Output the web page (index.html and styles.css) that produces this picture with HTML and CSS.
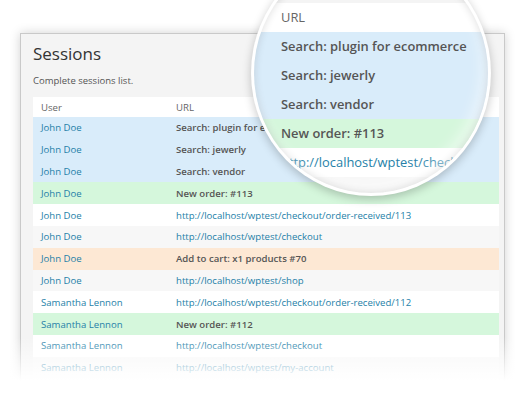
FILE: index.html
```html
<!doctype html>
<html lang="en">
  <head>
    <meta charset="UTF-8" />
    <meta name="viewport" content="width=device-width, initial-scale=1.0" />
    <title>Sessions</title>
    <link rel="stylesheet" href="styles.css">
  </head>
  <body>
    <div class="stage">
      <div class="card">
        <h1>Sessions</h1>
        <p class="desc">Complete sessions list.</p>

        <table class="sessions">
          <colgroup>
            <col class="col-user" />
            <col />
          </colgroup>
          <thead>
            <tr><th>User</th><th>URL</th></tr>
          </thead>
          <tbody>
            <tr class="search"><td><a href="#">John Doe</a></td><td class="action">Search: plugin for ecommerce</td></tr>
            <tr class="search"><td><a href="#">John Doe</a></td><td class="action">Search: jewerly</td></tr>
            <tr class="search"><td><a href="#">John Doe</a></td><td class="action">Search: vendor</td></tr>
            <tr class="order"><td><a href="#">John Doe</a></td><td class="action">New order: #113</td></tr>
            <tr><td><a href="#">John Doe</a></td><td><a href="#">http://localhost/wptest/checkout/order-received/113</a></td></tr>
            <tr><td><a href="#">John Doe</a></td><td><a href="#">http://localhost/wptest/checkout</a></td></tr>
            <tr class="cart"><td><a href="#">John Doe</a></td><td class="action">Add to cart: x1 products #70</td></tr>
            <tr><td><a href="#">John Doe</a></td><td><a href="#">http://localhost/wptest/shop</a></td></tr>
            <tr><td><a href="#">Samantha Lennon</a></td><td><a href="#">http://localhost/wptest/checkout/order-received/112</a></td></tr>
            <tr class="order"><td><a href="#">Samantha Lennon</a></td><td class="action">New order: #112</td></tr>
            <tr><td><a href="#">Samantha Lennon</a></td><td><a href="#">http://localhost/wptest/checkout</a></td></tr>
            <tr><td><a href="#">Samantha Lennon</a></td><td><a href="#">http://localhost/wptest/my-account</a></td></tr>
          </tbody>
        </table>
      </div>

      <!-- magnifier over the URL column -->
      <div class="lens" aria-hidden="true">
        <div class="lens-rows">
          <div class="lens-row head">URL</div>
          <div class="lens-row search action">Search: plugin for ecommerce</div>
          <div class="lens-row search action">Search: jewerly</div>
          <div class="lens-row search action">Search: vendor</div>
          <div class="lens-row order action">New order: #113</div>
          <div class="lens-row link">http://localhost/wptest/checkout/order-received/113</div>
          <div class="lens-row stripe"></div>
        </div>
      </div>

      <div class="fade"></div>
    </div>
  </body>
</html>
```

FILE: styles.css
```css
html,
body {
  margin: 0;
  background: #fff;
}
body {
  font-family: "Open Sans", "DejaVu Sans", sans-serif;
  width: 524px;
  height: 393px;
  overflow: hidden;
}
.stage {
  position: relative;
  height: 393px;
  padding: 33px 19px 0 20px;
  box-sizing: border-box;
  overflow: hidden;
}
.card {
  background: #f4f4f4;
  border: 1px solid #c9c9c9;
  box-shadow: 0 0 10px rgba(0, 0, 0, 0.18);
  padding: 9px 5px 0 12px;
  height: 380px;
}
h1 {
  margin: 0;
  font-size: 17px;
  line-height: 22px;
  font-weight: 400;
  color: #333;
}
.desc {
  margin: 9px 0 9px;
  font-size: 9.5px;
  line-height: 14px;
  color: #555;
}
.sessions {
  width: 100%;
  border-collapse: collapse;
  table-layout: fixed;
  font-size: 9.6px;
}
.col-user {
  width: 135px;
}
.sessions th,
.sessions td {
  padding: 0 8px;
  text-align: left;
  white-space: nowrap;
  overflow: hidden;
}
.sessions th {
  height: 20px;
  background: #fff;
  font-weight: 400;
  color: #666;
}
.sessions td {
  height: 21.8px;
  background: #fff;
}
.sessions tbody tr:nth-child(even) td {
  background: #f7f7f7;
}
.sessions a {
  color: #257fa8;
  text-decoration: none;
}
.sessions .action {
  color: #555;
  font-weight: 600;
}
.sessions tbody tr.search td {
  background: #d9ecfa;
}
.sessions tbody tr.order td {
  background: #d5f7dc;
}
.sessions tbody tr.cart td {
  background: #fde8d4;
}

/* magnifier */
.lens {
  position: absolute;
  left: 251px;
  top: -50px;
  width: 240px;
  height: 246px;
  box-sizing: border-box;
  border-radius: 50%;
  border: 3px solid rgba(255, 255, 255, 0.95);
  overflow: hidden;
  background: #f4f4f4;
  box-shadow: 0 3px 10px rgba(0, 0, 0, 0.22);
}
.lens::after {
  content: "";
  position: absolute;
  inset: 0;
  border-radius: 50%;
  box-shadow: inset 0 0 8px rgba(0, 0, 0, 0.14), inset -6px -8px 14px rgba(255, 255, 255, 0.5);
}
.lens-rows {
  position: absolute;
  left: 0;
  right: 0;
  top: 50px;
  font-size: 12.9px;
}
.lens-row {
  height: 29px;
  line-height: 29px;
  padding-left: 27px;
  white-space: nowrap;
  background: #fff;
  color: #555;
}
.lens-row.head {
  color: #666;
}
.lens-row.search {
  background: #d9ecfa;
}
.lens-row.order {
  background: #d5f7dc;
}
.lens-row.stripe {
  background: #f7f7f7;
}
.lens-row.action {
  font-weight: 600;
}
.lens-row.link {
  color: #257fa8;
}

.fade {
  position: absolute;
  left: 0;
  right: 0;
  bottom: 0;
  height: 56px;
  background: linear-gradient(to bottom, rgba(255, 255, 255, 0), #fff 78%);
}
```
